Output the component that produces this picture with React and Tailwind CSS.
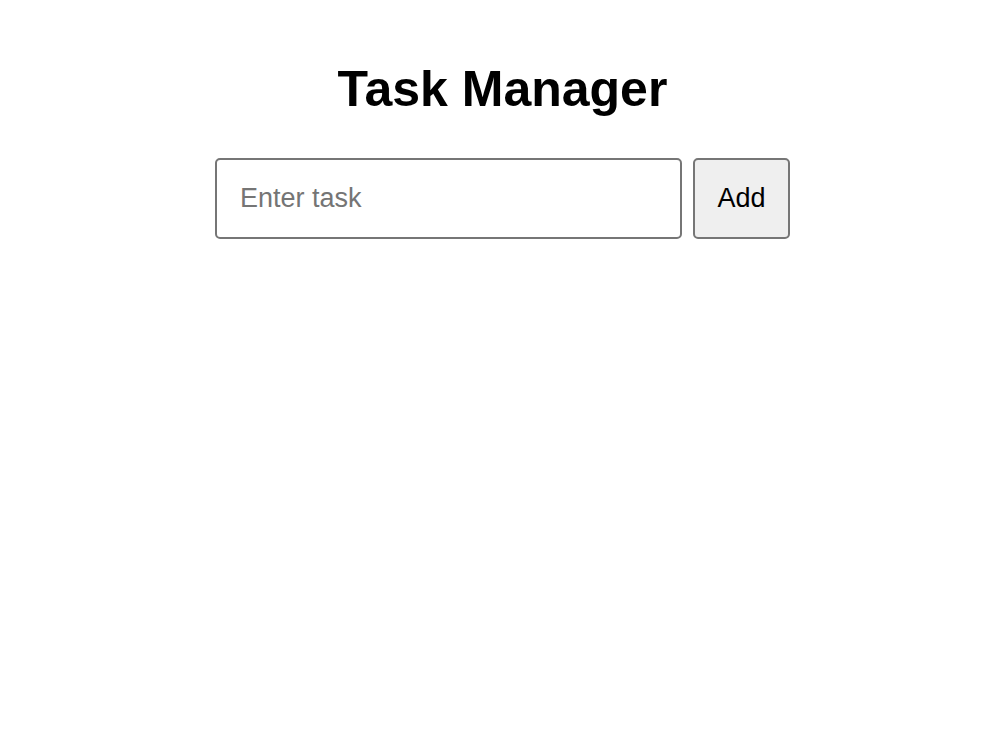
import { useState } from "react";

export default function App() {
  const [task, setTask] = useState("");
  const [tasks, setTasks] = useState([]);

  const addTask = () => {
    if (!task.trim()) return;
    setTasks((prev) => [...prev, task.trim()]);
    setTask("");
  };

  return (
    <div className="min-h-[750px] bg-white pt-[61px] pl-[5px] font-['Liberation_Sans',Arial,sans-serif] text-black">
      <h1 className="text-center text-[50px] font-bold leading-[57px]">Task Manager</h1>

      <div className="mt-[40px] flex justify-center gap-[11px]">
        <input
          type="text"
          placeholder="Enter task"
          value={task}
          onChange={(e) => setTask(e.target.value)}
          className="h-[81px] w-[467px] rounded-[5px] border-2 border-[#767676] px-[23px] text-[27px] placeholder:text-[#757575] outline-none"
        />
        <button
          onClick={addTask}
          className="h-[81px] w-[97px] rounded-[5px] border-2 border-[#767676] bg-[#efefef] text-[27px]"
        >
          Add
        </button>
      </div>

      {/* Task list */}
      {tasks.length > 0 && (
        <ul className="mx-auto mt-6 w-[575px] space-y-2 text-[24px]">
          {tasks.map((t, i) => (
            <li key={i}>{t}</li>
          ))}
        </ul>
      )}
    </div>
  );
}
